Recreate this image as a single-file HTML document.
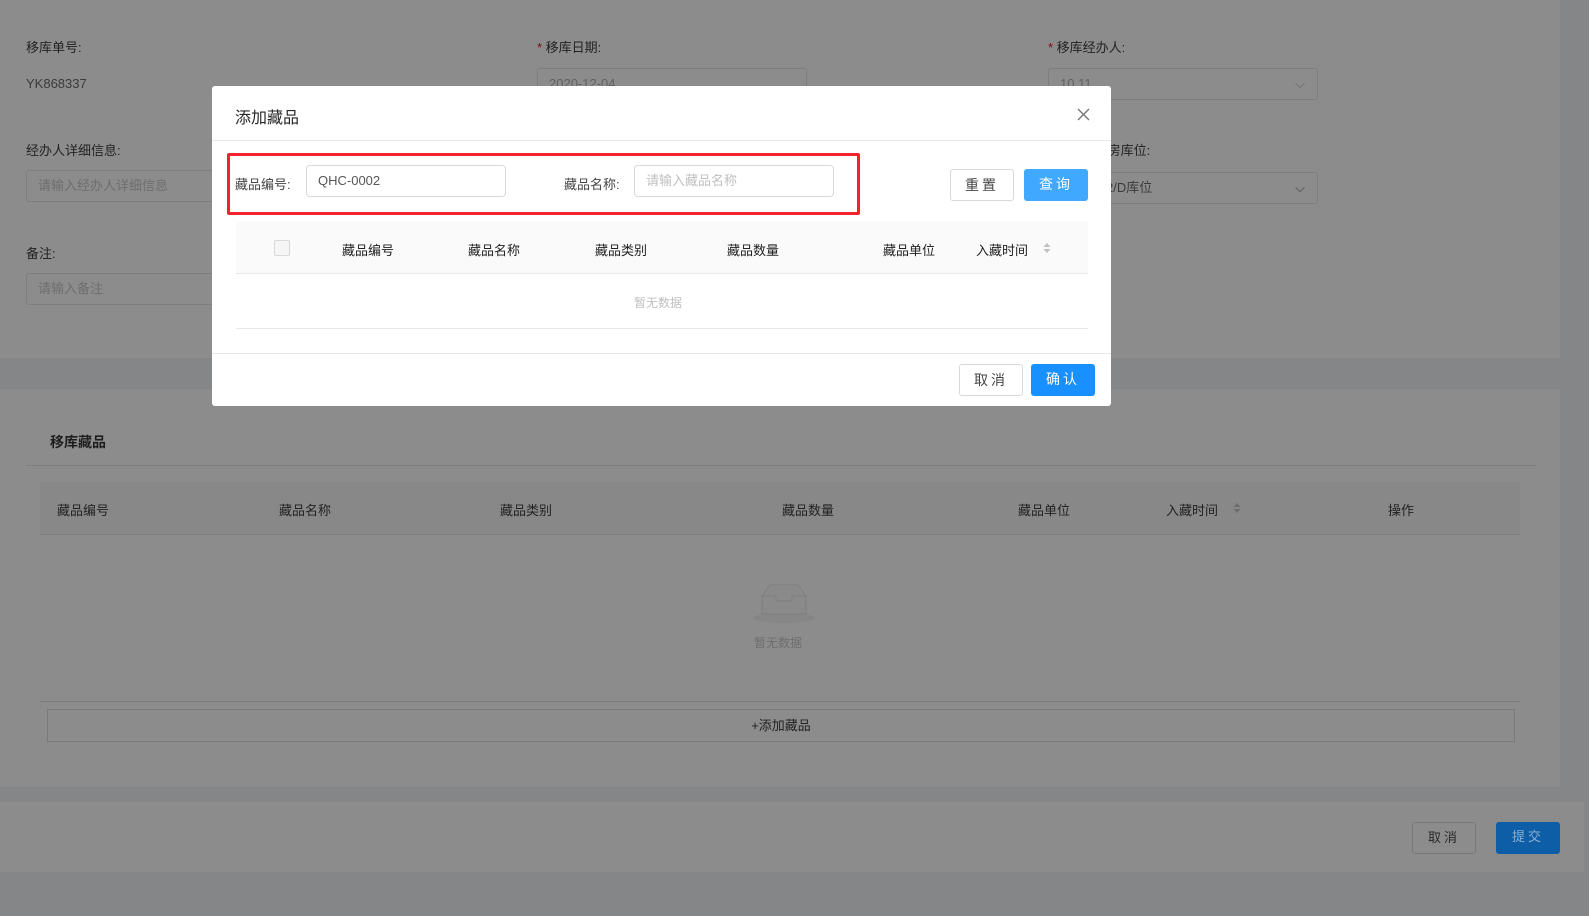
<!DOCTYPE html>
<html><head><meta charset="utf-8"><style>
*{box-sizing:border-box;margin:0;padding:0}
body{width:1589px;height:916px;position:relative;overflow:hidden;background:#858688;font-family:"Liberation Sans","Noto Sans CJK SC",sans-serif;font-size:13px;color:#262626}
.a{position:absolute}
.card{background:#8c8c8c}
.lbl{color:#232323;font-size:13px}
.inp{border:1px solid #7e7e7e;border-radius:3px;background:#8c8c8c;color:#606060;padding:0 11px;line-height:30px;font-size:13px}
.star{color:#7a0a0a}
.m{background:#fff}
.th{color:#222;font-size:13px}
.btn{border-radius:3px;text-align:center;line-height:30px;font-size:13px;letter-spacing:3px}
</style></head><body>
<div class="a card" style="left:0;top:0;width:1560px;height:358px"></div>
<div class="a lbl" style="left:26px;top:37px">移库单号:</div>
<div class="a lbl" style="left:537px;top:37px"><span class="star">*</span> 移库日期:</div>
<div class="a lbl" style="left:1048px;top:37px"><span class="star">*</span> 移库经办人:</div>
<div class="a" style="left:26px;top:76px;color:#3a3a3a">YK868337</div>
<div class="a inp" style="left:537px;top:68px;width:270px;height:32px">2020-12-04</div>
<div class="a inp" style="left:1048px;top:68px;width:270px;height:32px">10.11<span style="position:absolute;right:12px;top:0">⌵</span></div>
<div class="a lbl" style="left:26px;top:140px">经办人详细信息:</div>
<div class="a inp" style="left:26px;top:170px;width:200px;height:32px;color:#6e6e6e">请输入经办人详细信息</div>
<div class="a lbl" style="left:1060px;top:140px">* 调入库房库位:</div>
<div class="a inp" style="left:1048px;top:172px;width:270px;height:32px;color:#3a3a3a;padding-left:0"><span style="position:absolute;left:5px">新区库房2/D库位</span><span style="position:absolute;right:12px;top:0">⌵</span></div>
<div class="a lbl" style="left:26px;top:243px">备注:</div>
<div class="a inp" style="left:26px;top:273px;width:200px;height:32px;color:#6e6e6e">请输入备注</div>
<div class="a card" style="left:0;top:389px;width:1560px;height:398px"></div>
<div class="a" style="left:50px;top:432px;font-size:14px;font-weight:bold;color:#1e1e1e">移库藏品</div>
<div class="a" style="left:26px;top:465px;width:1510px;height:1px;background:#7f7f7f"></div>
<div class="a" style="left:40px;top:482px;width:1480px;height:52px;background:#888"></div>
<div class="a" style="left:40px;top:534px;width:1480px;height:1px;background:#7c7c7c"></div>
<div class="a th" style="left:57px;top:500px">藏品编号</div>
<div class="a th" style="left:279px;top:500px">藏品名称</div>
<div class="a th" style="left:500px;top:500px">藏品类别</div>
<div class="a th" style="left:782px;top:500px">藏品数量</div>
<div class="a th" style="left:1018px;top:500px">藏品单位</div>
<div class="a th" style="left:1166px;top:500px">入藏时间</div>
<svg class="a" style="left:1233px;top:502px" width="8" height="12"><path d="M0.5 5L4 1L7.5 5Z M0.5 7L4 11L7.5 7Z" fill="#6e6e6e"/></svg>
<div class="a th" style="left:1388px;top:500px">操作</div>
<svg class="a" style="left:752px;top:582px" width="64" height="42"><ellipse cx="32" cy="36" rx="31" ry="5" fill="#868686"/><path d="M10 14 L18 3 H46 L54 14 V32 H10 Z" fill="#8a8a8a" stroke="#7e7e7e"/><path d="M10 14 H24 V19 H40 V14 H54" fill="none" stroke="#7e7e7e"/></svg>
<div class="a" style="left:754px;top:634px;color:#6e6e6e;font-size:12px">暂无数据</div>
<div class="a" style="left:40px;top:701px;width:1480px;height:1px;background:#7c7c7c"></div>
<div class="a" style="left:47px;top:709px;width:1468px;height:33px;border:1px solid #7a7a7a;text-align:center;line-height:31px;color:#222">+添加藏品</div>
<div class="a card" style="left:0;top:802px;width:1584px;height:70px"></div>
<div class="a btn" style="left:1412px;top:822px;width:64px;height:32px;border:1px solid #787878;color:#2a2a2a">取消</div>
<div class="a btn" style="left:1496px;top:822px;width:64px;height:32px;background:#0d5ea6;color:#8cb0d0">提交</div>
<div class="a m" style="left:212px;top:86px;width:899px;height:320px;border-radius:3px"></div>
<div class="a" style="left:235px;top:104px;font-size:16px;color:#262626">添加藏品</div>
<svg class="a" style="left:1077px;top:108px" width="13" height="13"><path d="M1 1L12 12M12 1L1 12" stroke="#777" stroke-width="1.4"/></svg>
<div class="a" style="left:212px;top:140px;width:899px;height:1px;background:#e8e8e8"></div>
<div class="a" style="left:227px;top:153px;width:633px;height:62px;border:3px solid #f5222d;border-radius:2px"></div>
<div class="a" style="left:235px;top:174px;color:#444">藏品编号:</div>
<div class="a" style="left:306px;top:165px;width:200px;height:32px;border:1px solid #d9d9d9;border-radius:4px;padding-left:11px;line-height:30px;color:#555">QHC-0002</div>
<div class="a" style="left:564px;top:174px;color:#444">藏品名称:</div>
<div class="a" style="left:634px;top:165px;width:200px;height:32px;border:1px solid #d9d9d9;border-radius:4px;padding-left:11px;line-height:30px;color:#bfbfbf">请输入藏品名称</div>
<div class="a btn" style="left:950px;top:169px;width:64px;height:32px;border:1px solid #d9d9d9;color:#444;font-size:14px">重置</div>
<div class="a btn" style="left:1024px;top:169px;width:64px;height:32px;background:#40a9ff;color:#fff;font-size:14px">查询</div>
<div class="a" style="left:236px;top:221px;width:852px;height:53px;background:#fafafa;border-bottom:1px solid #e8e8e8"></div>
<div class="a" style="left:274px;top:240px;width:16px;height:16px;border:1px solid #d9d9d9;border-radius:2px;background:#f5f5f5"></div>
<div class="a th" style="left:342px;top:240px">藏品编号</div>
<div class="a th" style="left:468px;top:240px">藏品名称</div>
<div class="a th" style="left:595px;top:240px">藏品类别</div>
<div class="a th" style="left:727px;top:240px">藏品数量</div>
<div class="a th" style="left:883px;top:240px">藏品单位</div>
<div class="a th" style="left:976px;top:240px">入藏时间</div>
<svg class="a" style="left:1043px;top:242px" width="8" height="12"><path d="M0.5 5L4 1L7.5 5Z M0.5 7L4 11L7.5 7Z" fill="#bfbfbf"/></svg>
<div class="a" style="left:634px;top:294px;color:#bfbfbf;font-size:12px">暂无数据</div>
<div class="a" style="left:236px;top:328px;width:852px;height:1px;background:#e8e8e8"></div>
<div class="a" style="left:212px;top:353px;width:899px;height:1px;background:#e8e8e8"></div>
<div class="a btn" style="left:959px;top:364px;width:64px;height:32px;border:1px solid #d9d9d9;color:#444;font-size:14px">取消</div>
<div class="a btn" style="left:1031px;top:364px;width:64px;height:32px;background:#1890ff;color:#fff;font-size:14px">确认</div>
</body></html>
